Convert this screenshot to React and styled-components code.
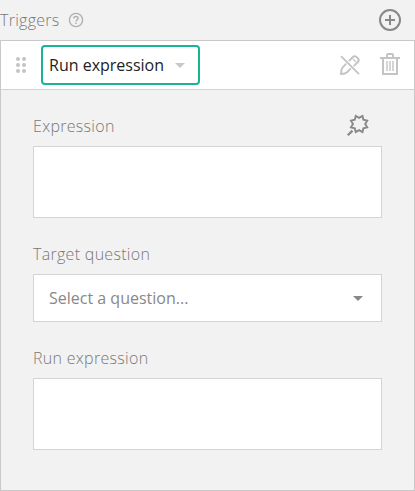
import React from "react";
import styled, { createGlobalStyle } from "styled-components";

const GlobalStyle = createGlobalStyle`
  * { box-sizing: border-box; }
  body {
    margin: 0;
    background: #f2f2f2;
    font-family: "Open Sans", sans-serif;
    font-size: 16px;
    line-height: 24px;
    color: #888888;
  }
`;

const Page = styled.main`
  display: flex;
  flex-direction: column;
  width: 415px;
  height: 491px;
  overflow: hidden;
`;

const TitleBar = styled.header`
  display: flex;
  align-items: center;
  height: 40px;
  flex: none;
  padding-right: 14px;
`;

const Title = styled.h1`
  margin: 0 8px 0 0;
  width: 60px;
  font-size: 16px;
  font-weight: 300;
  letter-spacing: 0.28px;
  color: #787878;
`;

const IconButton = styled.button`
  display: flex;
  padding: 0;
  border: 0;
  background: none;
  color: ${({ $tone }) => $tone};
  margin-left: ${({ $push }) => ($push ? "auto" : "0")};
`;

const Icon = styled.svg`
  display: block;
  flex: none;
  overflow: visible;
  fill: none;
  stroke: currentColor;
`;

const Panel = styled.section`
  flex: 1;
  border: 1px solid #c9c9c9;
`;

const PanelHeader = styled.div`
  display: flex;
  align-items: center;
  height: 49px;
  padding: 0 13px 0 15px;
  background: #fff;
  border-bottom: 1px solid #d2d2d2;
`;

const DragHandle = styled.div`
  display: grid;
  grid-template-columns: repeat(2, 4px);
  gap: 2px;
  margin-right: 15px;
`;

const Dot = styled.i`
  height: 4px;
  border-radius: 50%;
  background: #c4c4c4;
`;

const TriggerSelect = styled.button`
  display: flex;
  align-items: center;
  width: 159px;
  height: 40px;
  padding: 0 13px 0 6px;
  justify-content: space-between;
  border: 2px solid #1ab394;
  border-radius: 4px;
  background: #fff;
  color: #222222;
  font: inherit;
`;

const Caret = styled.span`
  width: 0;
  border: 5px solid transparent;
  border-top-color: ${({ $tone }) => $tone};
  border-bottom: 0;
`;

const Actions = styled.div`
  display: flex;
  align-items: center;
  gap: 18px;
  margin-left: auto;
`;

const Form = styled.div`
  display: flex;
  flex-direction: column;
  gap: 24px;
  padding: 24px 32px;
`;

const Field = styled.div`
  display: flex;
  flex-direction: column;
  gap: 8px;
`;

const LabelRow = styled.div`
  display: flex;
  align-items: center;
  height: 24px;
  padding-right: 12px;
`;

const Label = styled.label`
  font-weight: 300;
  letter-spacing: 0.3px;
  color: #787878;
`;

const TextArea = styled.textarea`
  display: block;
  width: 349px;
  height: 72px;
  resize: none;
  border: 1px solid #d4d4d4;
  border-radius: 0;
  background: #fff;
  outline: none;
`;

const QuestionSelect = styled.div`
  display: flex;
  align-items: center;
  justify-content: space-between;
  width: 349px;
  height: 48px;
  padding: 0 18px 0 15px;
  border: 1px solid #d4d4d4;
  background: #fff;
`;

const starPoints = Array.from({ length: 16 }, (_, i) => {
  const radius = i % 2 ? 6.1 : 8.8;
  const angle = ((i + 1.5 - 0.5) * Math.PI) / 8;
  return `${(12.1 + radius * Math.cos(angle)).toFixed(2)},${(9 + radius * Math.sin(angle)).toFixed(2)}`;
}).join(" ");

export default function App() {
  return (
    <Page>
      <GlobalStyle />
      <TitleBar>
        <Title>Triggers</Title>
        <IconButton $tone="#b0b0b0" aria-label="Help">
          <Icon width="16" height="16" viewBox="0 0 16 16" strokeWidth="1.3">
            <circle cx="8" cy="8" r="6.6" />
            <path d="M5.9 6.5C5.9 3.7 10.1 3.8 10.1 6.3C10.1 7.8 8 7.8 8 9.6" strokeWidth="1.5" />
            <path d="M8 10.7V12" strokeWidth="1.6" />
          </Icon>
        </IconButton>
        <IconButton $tone="#888888" $push aria-label="Add trigger">
          <Icon width="22" height="22" viewBox="0 0 22 22" strokeWidth="2">
            <circle cx="11" cy="11" r="10" />
            <path d="M6 11H16M11 6V16" />
          </Icon>
        </IconButton>
      </TitleBar>
      <Panel>
        <PanelHeader>
          <DragHandle>
            {Array.from({ length: 6 }, (_, i) => <Dot key={i} />)}
          </DragHandle>
          <TriggerSelect>
            Run expression
            <Caret $tone="#c8c8c8" />
          </TriggerSelect>
          <Actions>
            <IconButton $tone="#c4c4c4" aria-label="Disable editing">
              <Icon width="22" height="24" viewBox="0 0 22 24" strokeWidth="1.9">
                <path d="M2 3.2L20 21.2" />
                <path d="M7.2 10.7L3.5 14.5Q1.8 16.8 2 21Q6 21.2 8.3 19L11.9 15.4" />
                <path d="M9.9 8L13.9 4C16.5 1.4 21.5 6.4 18.9 9L14.8 13.1" />
                <path d="M14 6L17 9" strokeWidth="1.1" />
              </Icon>
            </IconButton>
            <IconButton $tone="#c4c4c4" aria-label="Delete trigger">
              <Icon width="22" height="24" viewBox="0 0 22 24" strokeWidth="2">
                <path d="M1 5H21M4 5V21H18V5M8 5V2Q8 1 9 1H13Q14 1 14 2V5" />
                <path d="M8 8V18M11 8V18M14 8V18" strokeWidth="1.4" />
              </Icon>
            </IconButton>
          </Actions>
        </PanelHeader>
        <Form>
          <Field>
            <LabelRow>
              <Label htmlFor="expression">Expression</Label>
              <IconButton $tone="#888888" $push aria-label="Expression assistant">
                <Icon width="23" height="22" viewBox="0 0 23 22" strokeWidth="1.9">
                  <polygon points={starPoints} />
                  <path d="M0.8 20.2L5.5 15.6" strokeWidth="2.2" />
                </Icon>
              </IconButton>
            </LabelRow>
            <TextArea id="expression" />
          </Field>
          <Field>
            <LabelRow><Label>Target question</Label></LabelRow>
            <QuestionSelect>
              Select a question...
              <Caret $tone="#888888" />
            </QuestionSelect>
          </Field>
          <Field>
            <LabelRow><Label htmlFor="run">Run expression</Label></LabelRow>
            <TextArea id="run" />
          </Field>
        </Form>
      </Panel>
    </Page>
  );
}
